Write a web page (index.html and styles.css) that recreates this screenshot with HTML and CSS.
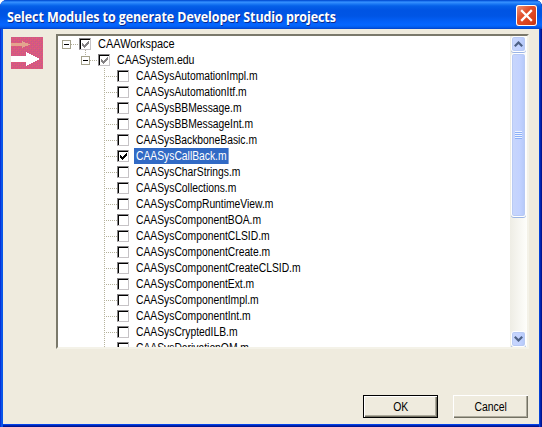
FILE: index.html
```
<!DOCTYPE html>
<html lang="en">
<head>
<meta charset="utf-8">
<title>Select Modules to generate Developer Studio projects</title>
<link rel="stylesheet" href="styles.css">
</head>
<body>
<svg width="0" height="0" class="defs"><symbol id="tick" viewBox="0 0 7 7"><path d="M0 2h1v1h1v1h1V3h1V2h1V1h1V0h1v3H6v1H5v1H4v1H3v1H2V6H1V5H0z"/></symbol></svg>
<div class="window">
  <header class="titlebar">
    <h1 class="title">Select Modules to generate Developer Studio projects</h1>
    <button class="close" aria-label="Close"><svg width="21" height="21" viewBox="0 0 21 21"><path d="M6 6l9 9M15 6l-9 9" stroke="#fff" stroke-width="2.3" stroke-linecap="square"/></svg></button>
  </header>
  <main class="content">
    <svg class="logo" width="32" height="32" viewBox="0 0 32 32" shape-rendering="crispEdges">
      <defs><pattern id="dither" width="4" height="4" patternUnits="userSpaceOnUse"><rect width="4" height="4" fill="#d95880"/><path d="M0 0h1v1H0zM2 2h1v1H2z" fill="#bd6483"/><path d="M2 0h1v1H2zM0 2h1v1H0z" fill="#d4508f"/><path d="M1 1h1v1H1zM3 3h1v1H3z" fill="#e06470"/></pattern></defs>
      <rect width="32" height="32" fill="url(#dither)"/>
      <path d="M0 6h11V4l8 3.5-8 3.5V9H0z" fill="#e3a48e"/>
      <path d="M0 19h15v-4l14 7-14 7v-4H0z" fill="#fff"/>
    </svg>
    <section class="tree">
      <ul class="rows">
        <li class="row root"><i class="expand"></i><i class="dash short"></i><i class="box"><svg class="tick gray"><use href="#tick"/></svg></i><span class="label">CAAWorkspace</span></li>
        <li class="row sub"><i class="stem"></i><i class="expand"></i><i class="dash short"></i><i class="box"><svg class="tick gray"><use href="#tick"/></svg></i><span class="label">CAASystem.edu</span></li>
        <li class="row leaf"><i class="dash"></i><i class="box"></i><span class="label">CAASysAutomationImpl.m</span></li>
        <li class="row leaf"><i class="dash"></i><i class="box"></i><span class="label">CAASysAutomationItf.m</span></li>
        <li class="row leaf"><i class="dash"></i><i class="box"></i><span class="label">CAASysBBMessage.m</span></li>
        <li class="row leaf"><i class="dash"></i><i class="box"></i><span class="label">CAASysBBMessageInt.m</span></li>
        <li class="row leaf"><i class="dash"></i><i class="box"></i><span class="label">CAASysBackboneBasic.m</span></li>
        <li class="row leaf"><i class="dash"></i><i class="box"><svg class="tick"><use href="#tick"/></svg></i><span class="label selected">CAASysCallBack.m</span></li>
        <li class="row leaf"><i class="dash"></i><i class="box"></i><span class="label">CAASysCharStrings.m</span></li>
        <li class="row leaf"><i class="dash"></i><i class="box"></i><span class="label">CAASysCollections.m</span></li>
        <li class="row leaf"><i class="dash"></i><i class="box"></i><span class="label">CAASysCompRuntimeView.m</span></li>
        <li class="row leaf"><i class="dash"></i><i class="box"></i><span class="label">CAASysComponentBOA.m</span></li>
        <li class="row leaf"><i class="dash"></i><i class="box"></i><span class="label">CAASysComponentCLSID.m</span></li>
        <li class="row leaf"><i class="dash"></i><i class="box"></i><span class="label">CAASysComponentCreate.m</span></li>
        <li class="row leaf"><i class="dash"></i><i class="box"></i><span class="label">CAASysComponentCreateCLSID.m</span></li>
        <li class="row leaf"><i class="dash"></i><i class="box"></i><span class="label">CAASysComponentExt.m</span></li>
        <li class="row leaf"><i class="dash"></i><i class="box"></i><span class="label">CAASysComponentImpl.m</span></li>
        <li class="row leaf"><i class="dash"></i><i class="box"></i><span class="label">CAASysComponentInt.m</span></li>
        <li class="row leaf"><i class="dash"></i><i class="box"></i><span class="label">CAASysCryptedILB.m</span></li>
        <li class="row leaf"><i class="dash"></i><i class="box"></i><span class="label">CAASysDerivationQM.m</span></li>
      </ul>
      <div class="scrollbar">
        <div class="arrow"><svg width="9" height="6" viewBox="0 0 9 6"><path d="M.8 5.2L4.5 1.5l3.7 3.7" fill="none" stroke="#4d6185" stroke-width="2.2"/></svg></div>
        <div class="thumb"><div class="grip"></div></div>
        <div class="track"></div>
        <div class="arrow"><svg width="9" height="6" viewBox="0 0 9 6"><path d="M.8.8l3.7 3.7L8.2.8" fill="none" stroke="#4d6185" stroke-width="2.2"/></svg></div>
      </div>
    </section>
  </main>
  <footer class="actions">
    <button class="button default"><span>OK</span></button>
    <button class="button"><span>Cancel</span></button>
  </footer>
</div>
</body>
</html>
```
FILE: styles.css
```
* { box-sizing: border-box; }
body { margin: 0; background: #fff; font-family: "Liberation Sans", Arial, sans-serif; font-size: 12px; color: #000; }
button { margin: 0; padding: 0; border: 0; font: inherit; color: inherit; }
.defs { position: absolute; }
.window {
  width: 542px; height: 427px; overflow: hidden;
  display: flex; flex-direction: column;
  background: #efebde;
  border-radius: 7px 7px 0 0;
  box-shadow: inset 1px 0 #0831d9, inset 3px 0 #0855e8, inset -1px 0 #001590, inset -2px 0 #0025b0, inset -3px 0 #0441d8, inset 0 -1px #001590, inset 0 -2px #0025b0, inset 0 -3px #0441e8;
}
.titlebar {
  height: 29px; flex: none; padding: 4px 5px 0 7px;
  display: flex; justify-content: space-between;
  background: linear-gradient(#0648c8 0, #0a62e8 1px, #3a93ff 2px, #1a78f5 4px, #0560e8 6px, #0054e3 10px, #0055e5 16px, #0361fa 22px, #0566ff 25px, #025df0 27px, #0142c8 29px);
}
.title { margin: 0; font: bold 14px/25px "Open Sans", sans-serif; color: #fff; text-shadow: 1px 1px #0a2a8c; white-space: nowrap; letter-spacing: -.1px; transform: scaleX(.893); transform-origin: left; }
.close {
  width: 21px; height: 21px; margin-top: 1px; display: flex; flex: none;
  border-radius: 3px; background: linear-gradient(135deg, #f09c80, #e2502c 40%, #d8401a 75%, #b83010);
  box-shadow: inset 0 0 0 1px #fff;
}
.content { display: flex; gap: 13px; padding: 5px 14px 0 11px; align-items: flex-start; }
.logo { margin-top: 3px; flex: none; }
.tree {
  width: 473px; height: 315px; flex: none; display: flex; overflow: hidden; background: #fff;
  border: 2px solid;
  border-color: #7b796b #f4f2e8 #f4f2e8 #7b796b;
}
.rows { flex: 1; margin: 0; padding: 0 0 0 4px; list-style: none; height: 311px; overflow: hidden; }
.row { height: 16px; display: flex; align-items: center; position: relative; white-space: nowrap; }
.sub { padding-left: 19px; }
.leaf { padding-left: 42px; background: repeating-linear-gradient(#b5b29c 0 1px, transparent 1px 2px) 42px 0 / 1px 16px no-repeat; }
.stem { position: absolute; left: 23px; top: -2px; width: 1px; height: 6px; background: repeating-linear-gradient(#b5b29c 0 1px, transparent 1px 2px); }
.expand { width: 9px; height: 9px; flex: none; border: 1px solid #a5a28c; background: linear-gradient(#000, #000) 1px 3px / 5px 1px no-repeat; }
.dash { width: 13px; height: 1px; flex: none; background: repeating-linear-gradient(90deg, #b5b29c 0 1px, transparent 1px 2px); }
.dash.short { width: 8px; }
.box {
  width: 12px; height: 12px; flex: none; padding: 2px 0 0 2px; display: flex;
  border: 1px solid; border-color: #848284 #c6c3c6 #c6c3c6 #848284;
  box-shadow: inset 1px 1px #000; background: #fff;
}
.tick { width: 7px; height: 7px; flex: none; fill: #000; shape-rendering: crispEdges; }
.tick.gray { fill: #848284; }
.label { margin-left: 5px; padding: 0 2.3px; line-height: 16px; height: 16px; transform: scaleX(.86); transform-origin: left; }
.root .label { transform: scaleX(.91); }
.sub .label { transform: scaleX(.88); }
.selected { background: #316ac5; color: #fff; }
.scrollbar { width: 17px; flex: none; display: flex; flex-direction: column; padding: 0 1px; background: linear-gradient(90deg, #eeede5, #fefefb); }
.arrow, .thumb {
  flex: none; display: flex; align-items: center; justify-content: center;
  border: 1px solid #fff; border-radius: 3px;
  background: linear-gradient(90deg, #c8d6fb, #c2d2ff 60%, #b4c8f8);
  box-shadow: inset 0 0 0 1px #b8caf4, 0 1px #9ab4e4;
}
.arrow { height: 16px; }
.thumb { height: 164px; margin-top: 1px; }
.track { flex: 1; }
.grip { width: 7px; height: 8px; margin-top: -1px; background: repeating-linear-gradient(#eef4fe 0 1px, #8cb0f8 1px 2px); }
.actions { display: flex; justify-content: flex-end; gap: 15px; padding: 46px 14px 0 0; }
.button {
  width: 75px; height: 23px; background: #efebde; display: flex; align-items: center; justify-content: center;
  box-shadow: inset 1px 1px #fff, inset -1px -1px #737163, inset -2px -2px #adaa9c;
}
.button span { transform: scaleX(.87); }
.default { border: 1px solid #000; }
```
